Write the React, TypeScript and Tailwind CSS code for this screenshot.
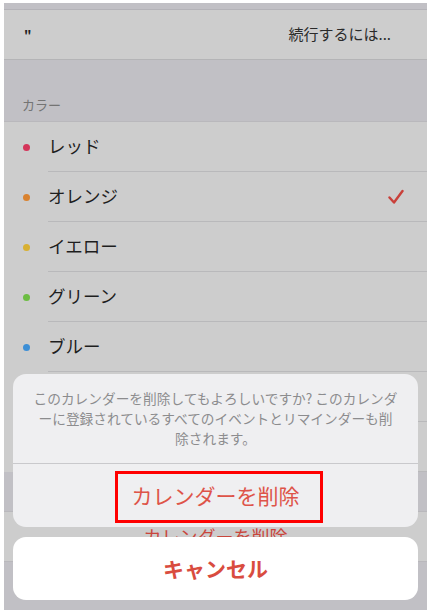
import React from "react";

const JP = { fontFamily: '"Noto Sans CJK JP", "Noto Sans", sans-serif' };

const colors = [
  { name: "レッド", c: "#d4355a", check: false },
  { name: "オレンジ", c: "#d9822f", check: true },
  { name: "イエロー", c: "#d8b032", check: false },
  { name: "グリーン", c: "#6cbd42", check: false },
  { name: "ブルー", c: "#3d8fd6", check: false },
  { name: "パープル", c: "#a35dc9", check: false },
  { name: "ブラウン", c: "#9b7b58", check: false },
];

function Row({ name, c, check }: { name: string; c: string; check: boolean }) {
  return (
    <div className="flex h-[50px] items-stretch bg-[#cdcdcd]">
      <div className="flex w-[44px] items-center pl-[19px]">
        <div className="h-[7px] w-[7px] rounded-full" style={{ backgroundColor: c }} />
      </div>
      <div className="flex flex-1 items-center justify-between border-b border-[#b9b9bb] pr-[23px]">
        <span className="text-[17.5px] text-[#1e1e1e]">{name}</span>
        {check && (
          <svg width="16" height="16" viewBox="0 0 16 16" className="mt-[1px]">
            <path d="M1.5 8.5 L6 13.5 L14.5 2" fill="none" stroke="#c9403a" strokeWidth="2.4" strokeLinecap="round" strokeLinejoin="round" />
          </svg>
        )}
      </div>
    </div>
  );
}

export default function App() {
  return (
    <div className="h-[614px] w-[431px] bg-white pt-[3px]" style={JP}>
      <div className="relative mx-[4px] h-[607px] overflow-hidden bg-[#c1c0c5]">
        {/* underlying page */}
        <div className="h-[7px] border-b border-[#b4b3b8] bg-[#c1c0c5]" />
        <div className="flex h-[50px] items-center justify-between border-b border-[#b4b4b6] bg-[#cdcdcd] pl-[20px] pr-[36px]">
          <span className="text-[13px] font-bold text-[#222]">"</span>
          <span className="text-[15px] text-[#2a2a2a]">続行するには...</span>
        </div>
        <div className="flex h-[62px] items-end border-b border-[#b9b8bc] bg-[#c1c0c5] pb-[7px] pl-[18px]">
          <span className="text-[13px] text-[#747474]">カラー</span>
        </div>
        {colors.map((r) => (
          <Row key={r.name} {...r} />
        ))}
        <div className="h-[40px] border-b border-[#b9b8bc] bg-[#c1c0c5]" />
        <div className="flex h-[50px] items-center justify-center border-b border-[#b9b8bc] bg-[#cdcdcd]">
          <span className="text-[18px] text-[#c9463c]">カレンダーを削除</span>
        </div>

        {/* action sheet */}
        <div className="absolute inset-x-0 bottom-0 flex flex-col gap-[10px] px-[9px] pb-[10px]">
          <div className="overflow-hidden rounded-[13px] bg-[#efeff1]">
            <div className="whitespace-nowrap px-[8px] pb-[15px] pt-[14px] text-center text-[13.7px] leading-[20px] text-[#8c8c8e]">
              このカレンダーを削除してもよろしいですか? このカレンダ
              <br />
              ーに登録されているすべてのイベントとリマインダーも削
              <br />
              除されます。
            </div>
            <div className="h-px bg-[#c9c9cc]" />
            <div className="relative flex h-[63px] items-center justify-center">
              <span className="text-[21px] text-[#de5449]">カレンダーを削除</span>
              <div className="absolute left-[102px] top-[7px] h-[52px] w-[208px] border-[3px] border-[#ff0000]" />
            </div>
          </div>
          <div className="flex h-[63px] items-center justify-center rounded-[13px] bg-white">
            <span className="text-[21px] font-bold text-[#d94c3f]">キャンセル</span>
          </div>
        </div>
      </div>
    </div>
  );
}
